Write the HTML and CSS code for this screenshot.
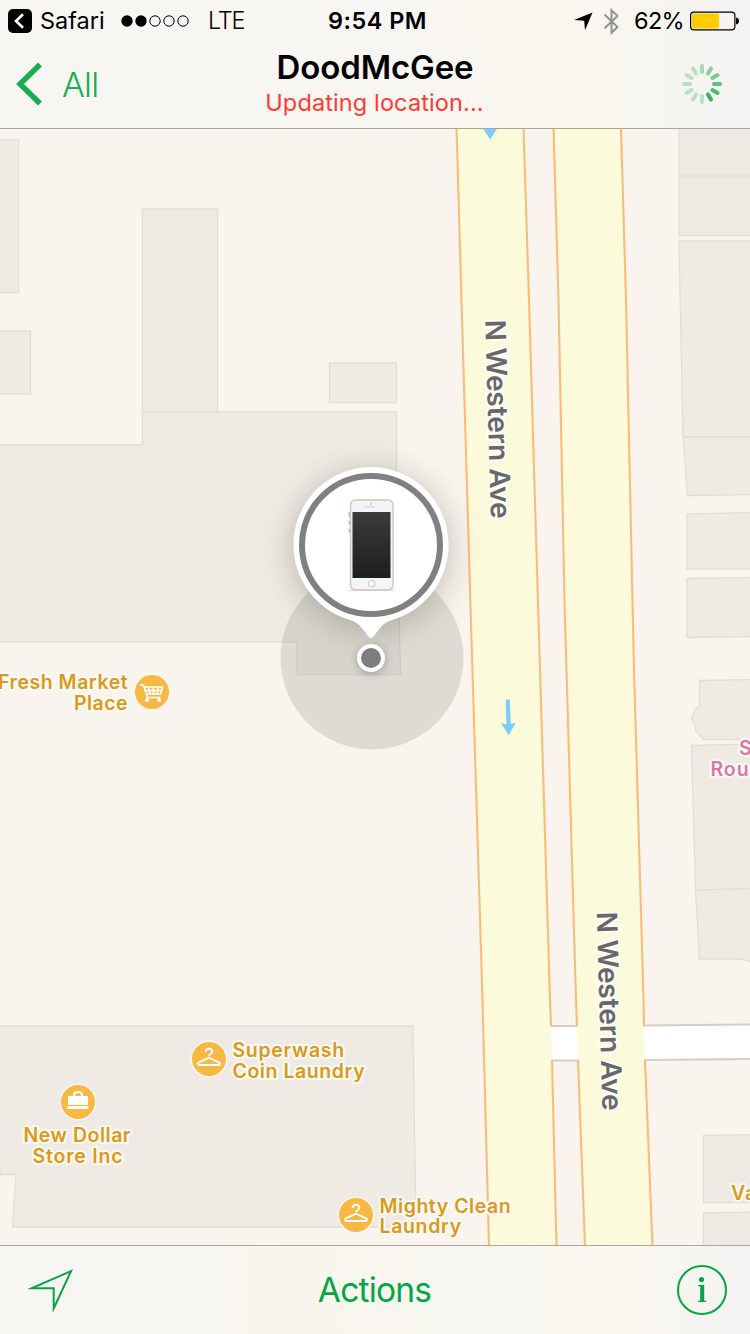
FILE: index.html
```html
<!DOCTYPE html>
<html lang="en">
<head>
<meta charset="utf-8">
<title>Find Friends</title>
<link rel="stylesheet" href="styles.css">
</head>
<body>
<div class="screen">
  <header class="top">
    <div class="status">
      <div class="status-left">
        <svg class="back-app" width="24" height="24" viewBox="0 0 24 24"><rect width="24" height="24" rx="5"/><path d="M15 5.200L8 12l7 6.800" fill="none" stroke="#fff" stroke-width="2.600"/></svg>
        <span class="safari">Safari</span>
        <svg class="signal" width="68" height="12" viewBox="0 0 68 12"><circle cx="6" cy="6" r="5.700"/><circle cx="20" cy="6" r="5.700"/><g fill="none" stroke="#000"><circle cx="34" cy="6" r="5.200"/><circle cx="48" cy="6" r="5.200"/><circle cx="62" cy="6" r="5.200"/></g></svg>
        <span class="carrier">LTE</span>
      </div>
      <span class="time">9:54 PM</span>
      <div class="status-right">
        <svg class="loc" width="19" height="19" viewBox="0 0 19 19"><path d="M18.500.500L0 8l10.200.700.800 9.600z"/></svg>
        <svg class="bt" width="17" height="27" viewBox="0 0 17 27"><path d="M1.500 6.500L14.500 19l-6 5.800V2.200l6 5.800L1.500 20.200" fill="none" stroke="#929292" stroke-width="2"/></svg>
        <span class="percent">62%</span>
        <svg class="battery" width="50" height="20" viewBox="0 0 50 20"><rect x=".6" y="1.100" width="44.300" height="17.800" rx="3.300" fill="none" stroke="#000" stroke-width="1.200"/><rect x="2" y="2.500" width="27" height="15" rx="1.500" fill="#fc0"/><path d="M46 6.700h1q2 .3 2 3.300t-2 3.300h-1z"/></svg>
      </div>
    </div>
    <nav class="nav">
      <div class="back">
        <svg width="27" height="44" viewBox="0 0 27 44"><path d="M24 2.500L4 22l20 19.500" fill="none" stroke="#1aad4b" stroke-width="5.400"/></svg>
        <span class="back-label">All</span>
      </div>
      <div class="heading"><h1 class="title">DoodMcGee</h1><p class="subtitle">Updating location...</p></div>
      <svg class="spinner" width="40" height="40" viewBox="-20 -20 40 40">
        <g stroke="#1aad4b" stroke-width="4" stroke-linecap="round">
          <path d="M0-12v-6" opacity=".37"/>
          <path d="M0-12v-6" opacity=".5" transform="rotate(30)"/>
          <path d="M0-12v-6" opacity=".58" transform="rotate(60)"/>
          <path d="M0-12v-6" opacity=".7" transform="rotate(90)"/>
          <path d="M0-12v-6" opacity=".78" transform="rotate(120)"/>
          <path d="M0-12v-6" opacity=".88" transform="rotate(150)"/>
          <path d="M0-12v-6" opacity=".28" transform="rotate(180)"/>
          <path d="M0-12v-6" opacity=".28" transform="rotate(210)"/>
          <path d="M0-12v-6" opacity=".28" transform="rotate(240)"/>
          <path d="M0-12v-6" opacity=".28" transform="rotate(270)"/>
          <path d="M0-12v-6" opacity=".28" transform="rotate(300)"/>
          <path d="M0-12v-6" opacity=".28" transform="rotate(330)"/>
        </g>
      </svg>
    </nav>
  </header>
  <main class="map">
    <svg class="map-canvas" width="750" height="1116" viewBox="0 129 750 1116">
      <defs>
        <linearGradient id="glass" x2="0" y2="1"><stop stop-color="#3b3b3b"/><stop offset="1" stop-color="#1e1e1e"/></linearGradient>
        <filter id="soft" x="-50%" y="-50%" width="200%" height="200%"><feGaussianBlur stdDeviation="17"/></filter>
        <filter id="dotshade" x="-50%" y="-50%" width="200%" height="200%"><feGaussianBlur stdDeviation="4"/></filter>
        <g id="hanger"><circle r="18.500" fill="#fbf8f2"/><circle r="17" fill="#f7b844"/><path d="M-3.200-7.200C-3.200-11.200 3.300-11.200 3.300-7.200c0 2.800-3.300 2-3.300 4.200M0-1.300L-10.500 3.700c-1 .6-.6 2.300.8 2.300H9.700c1.400 0 1.800-1.700.8-2.300z" fill="none" stroke="#fff" stroke-width="1.900"/></g>
      </defs>
      <rect y="129" width="750" height="1116" fill="#f9f4ed"/>
      <g class="building">
        <path d="M-2 140H18.500V292.500H-2zM-2 331H30.500V394H-2z"/>
        <path d="M-2 445H142.500V209H217.500V412H396.500V506L400.500 674.500H297V642H-2z"/>
        <path d="M142.500 412H217.500" />
        <path d="M329.500 363H396.500V402.500H329.500z"/>
        <path d="M-2 1026H413L416 1227H12.500L16 1174.500H.5L-2 1150z"/>
        <path d="M679 120H752V175H679zM679 177H752V235.500H679zM679 241H752V437H683z"/>
        <path d="M683 437H752V494.500L687.500 495.500zM687 514L752 512.500V569H687zM687 578.500L752 577.500V636.500L687 637.500z"/>
        <path d="M699.500 680.500L752 679.500V739.500H704L695.500 731V726L691.500 718 695 710 699.500 705.500z"/>
        <path d="M691.500 745.500L752 744V888.500L695.500 890zM695.500 890L752 888.500V962L741 959H699.500z"/>
        <path d="M703.500 1135.500L752 1134.500V1202.500H703.500zM703.500 1213L752 1212V1250H703.500z"/>
      </g>
      <path d="M549 1026H579V1060H549zM642 1026L750 1024.500V1058.500L642 1060z" fill="#fff"/>
      <path d="M549 1026H579M549 1060.500H579M642 1025.500L750 1024.500M642 1060L750 1059" stroke="#d7cdc4" stroke-width="2"/>
      <path d="M456.500 128L461.500 300 470.300 600 482.500 1000 489 1246H556.500L552 1060 551 1025 550 1000 540 670 529 300 523.500 128zM553.500 128L558.500 300 564.500 600 576 1000 577 1025 578 1060 585 1246H652.500L645 1060 644 1025 643.500 1000 634 670 626 300 621 128z" fill="#fbfadb"/>
      <g class="road-edge">
        <path d="M456.500 128L461.500 300 470.300 600 482.500 1000 489 1246"/>
        <path d="M523.500 128L529 300 540 670 550 1000 551 1026M552 1060L556.500 1246"/>
        <path d="M553.500 128L558.500 300 564.500 600 576 1000 577 1026M578 1060L585 1246"/>
        <path d="M621 128L626 300 634 670 643.500 1000 644 1026M645 1060L652.500 1246"/>
      </g>
      <g fill="#7ccbf8"><path d="M482.500 128H497.500L490.200 139.500z"/><path d="M505.700 699.500H509.800L510.800 724 515.800 722.800 508.800 735.300 501 723.200 506.500 724.500z"/></g>

      <g class="street">
        <text transform="translate(485.300 320) rotate(88.400)" textLength="199">N Western Ave</text>
        <text transform="translate(596.800 912) rotate(88.400)" textLength="199">N Western Ave</text>
      </g>
      <g class="poi">
        <text x="-2" y="689" textLength="130.500">Fresh Market</text><text x="74" y="710" textLength="54.500">Place</text>
        <text x="232.500" y="1056.500" textLength="112.500">Superwash</text><text x="232.500" y="1077.500" textLength="133">Coin Laundry</text>
        <text x="23.500" y="1142" textLength="108">New Dollar</text><text x="32.500" y="1163" textLength="91">Store Inc</text>
        <text x="379.500" y="1212.500" textLength="132">Mighty Clean</text><text x="379.500" y="1233" textLength="82.500">Laundry</text>
        <text x="731" y="1200">Vap</text>
      </g>
      <g class="poi pink"><text x="739" y="755">Su</text><text x="710.500" y="776">Rough</text></g>
      <g transform="translate(152 692)"><circle r="18.500" fill="#fbf8f2"/><circle r="17" fill="#f7b844"/><g fill="none" stroke="#fff" stroke-width="1.700"><path d="M-12-6.800H-8.500L-4.500 5.500H8.500M-7.600-5H10.500L8.600 2H-5.800M-7-1.500H9.700M-3.500-5L-2 2M1.500-5V2M6.200-5L5 2"/></g><circle cx="-5" cy="8" r="2" fill="#fff"/><circle cx="7.200" cy="8" r="2" fill="#fff"/></g>
      <use href="#hanger" x="209" y="1059"/><use href="#hanger" x="356" y="1215"/>
      <g transform="translate(78 1102)"><circle r="18.500" fill="#fbf8f2"/><circle r="17" fill="#f7b844"/><path d="M-10-6H10V3H-10zM-10.500 4H10.500V7H-10.500z" fill="#fff"/><path d="M-4-5V-6.500Q-4-10 0-10T4-6.500V-5" fill="none" stroke="#fff" stroke-width="2"/></g>

      <circle cx="372" cy="658" r="91.500" fill="#808077" fill-opacity=".21"/>
      <circle cx="371" cy="550" r="78" fill="#5a5547" opacity=".36" filter="url(#soft)"/>
      <path d="M371 467A78 78 0 0 1 392 620C382 623 378 631 374 636Q371 640 368 636C364 631 360 623 350 620A78 78 0 0 1 371 467z" fill="#fff"/>
      <circle cx="371" cy="545" r="69" fill="#fff" stroke="#808080" stroke-width="6"/>
      <circle cx="371" cy="660" r="14" opacity=".25" filter="url(#dotshade)"/>
      <circle cx="371" cy="658" r="14" fill="#fff"/><circle cx="371" cy="658" r="10" fill="#7e7e7e"/>
      <path d="M349 590.500H394" stroke="#e0deda" stroke-width="1"/>
      <path d="M349.300 512v5M349.300 520.500v4M349.300 528.500v4" stroke="#c5b9aa" stroke-width="1.500"/>
      <rect x="350.500" y="500" width="42.500" height="90" rx="5" fill="#f3f5f8" stroke="#d3c3b8" stroke-width="1.400"/>
      <rect x="352.500" y="512" width="38" height="66" fill="url(#glass)"/>
      <path d="M366.500 507H375" stroke="#d9dadd" stroke-width="1.800"/><circle cx="371" cy="504" r="1.100" fill="#b6c8d8"/><circle cx="364.500" cy="507" r=".8" fill="#ccc"/>
      <circle cx="371.700" cy="583.700" r="3.300" fill="#fafafa" stroke="#c8c3bc" stroke-width="1"/>
    </svg>
  </main>
  <footer class="toolbar">
    <svg class="locate" width="46" height="44" viewBox="0 0 46 44"><path d="M43 3.200L4 20.200H25.700V40.500z" fill="none" stroke="#04a642" stroke-width="2" stroke-miterlimit="10"/></svg>
    <span class="actions">Actions</span>
    <svg class="info" width="50" height="50" viewBox="0 0 50 50"><circle cx="25" cy="25" r="24" fill="none" stroke="#04a642" stroke-width="2"/><g fill="#04a642"><circle cx="24.500" cy="14.500" r="2.600"/><path d="M21.200 20h6v15.700h2V37h-8v-1.300h2V21.300h-2z"/></g></svg>
  </footer>
</div>
</body>
</html>
```
FILE: styles.css
```css
* { box-sizing: border-box; }
body { margin: 0; font-family: Inter, "Liberation Sans", sans-serif; color: #000; }
.screen { width: 750px; height: 1334px; display: flex; flex-direction: column; overflow: hidden; }
.top { height: 129px; flex: none; border-bottom: 1px solid #aaa69f; background: linear-gradient(90deg, #f8f6f3 0 50%, #faf7ef 72%, #f8f6f0 84%, #f5f4f2 96%); }
.status { height: 40px; display: grid; grid-template-columns: 1fr auto 1fr; align-items: center; padding: 0 10px 0 8px; font-size: 23.5px; line-height: 40px; white-space: nowrap; }
.status-left, .status-right { display: flex; align-items: center; }
.status-right { justify-content: flex-end; }
.safari { margin-left: 8px; width: 81px; }
.carrier { margin-left: 19px; letter-spacing: -1.2px; font-weight: 300; }
.time { padding-left: 7px; font-weight: 600; font-size: 23.5px; letter-spacing: .45px; line-height: 42px; }
.loc { margin-right: 10px; }
.bt { margin-right: 14px; }
.percent { margin-right: 6px; letter-spacing: -.7px; line-height: 42px; }
.nav { height: 88px; display: grid; grid-template-columns: 1fr auto 1fr; align-items: center; padding: 0 28px 0 16px; }
.back { display: flex; align-items: center; gap: 19px; color: #1aad4b; font-size: 34px; font-weight: 300; letter-spacing: -.8px; }
.heading { padding-left: 12px; text-align: center; }
.title { margin: 0; font-size: 33px; line-height: 38px; font-weight: 600; letter-spacing: -.1px; }
.subtitle { margin: 0 1px 0 0; font-size: 23.5px; line-height: 34px; letter-spacing: .12px; color: #ff3b30; }
.spinner { justify-self: end; }
.map { height: 1116px; flex: none; overflow: hidden; }
.map-canvas { display: block; }
.building { fill: #efebe4; stroke: #e1ded7; stroke-width: 1.3; }
.road-edge { fill: none; stroke: #f8bd7b; stroke-width: 2.1; }
.street text { font-size: 28px; font-weight: 600; fill: #68686b; stroke: #fdfdf5; stroke-width: 4px; stroke-linejoin: round; paint-order: stroke; }
.poi text { font-size: 19.5px; font-weight: 600; letter-spacing: .9px; fill: #dc9917; stroke: #fbf9f5; stroke-width: 4px; stroke-linejoin: round; paint-order: stroke; }
.pink text { fill: #db77a5; }
.toolbar { height: 89px; flex: none; display: grid; grid-template-columns: 1fr auto 1fr; align-items: center; padding: 0 23px 0 28px; border-top: 1px solid #aaa69f; background: linear-gradient(90deg, #f7f6f3 0 26%, #f9f5ed 35%, #f7f6f0 64%, #faf7f0 84%, #f5f4f2 96%); }
.actions { margin-right: 6px; font-size: 33.5px; line-height: 42px; letter-spacing: -.8px; color: #04a642; }
.info { justify-self: end; }
```
